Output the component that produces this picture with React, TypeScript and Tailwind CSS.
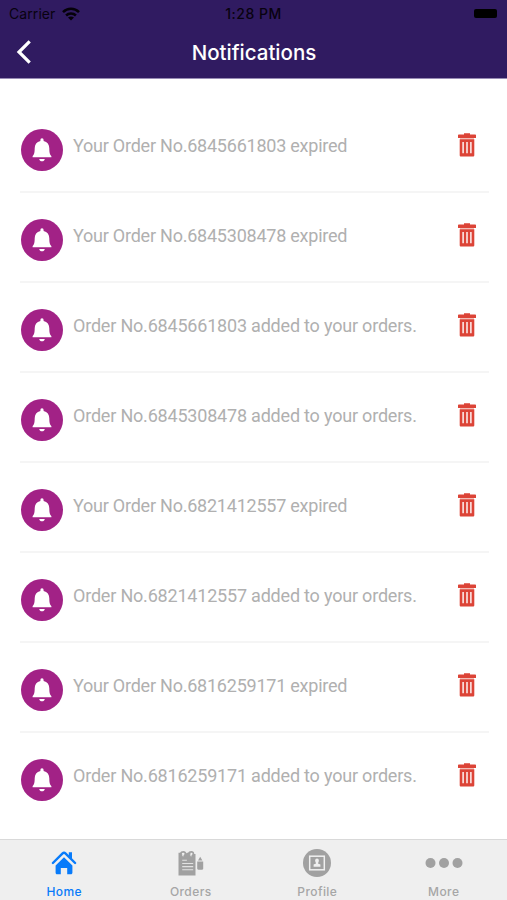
const messages = [
  'Your Order No.6845661803 expired',
  'Your Order No.6845308478 expired',
  'Order No.6845661803 added to your orders.',
  'Order No.6845308478 added to your orders.',
  'Your Order No.6821412557 expired',
  'Order No.6821412557 added to your orders.',
  'Your Order No.6816259171 expired',
  'Order No.6816259171 added to your orders.',
];

function Wifi() {
  return (
    <svg width="18" height="14" viewBox="0 0 18 14" fill="none" stroke="#050109" strokeWidth="2.5">
      <path d="M1 5.2C5.5 0.7 12.5 0.7 17 5.2" />
      <path d="M4.1 8.5C6.8 5.8 11.2 5.8 13.9 8.5" />
      <path d="M9 13.4L6 10.5C7.7 9 10.3 9 12 10.5Z" fill="#050109" stroke="none" />
    </svg>
  );
}

function Bell() {
  return (
    <svg width="42" height="42" viewBox="0 0 42 42" fill="white">
      <path d="M21 9.2c-1.1 0-1.6.8-1.6 2v.9c-3.8.8-5.7 3.5-5.7 7.2 0 4.6-.7 6.5-2.1 7.9v1.1h18.8v-1.1c-1.4-1.4-2.1-3.3-2.1-7.9 0-3.7-1.9-6.4-5.7-7.2v-.9c0-1.2-.5-2-1.6-2Z" />
      <path d="M18.2 30h5.6c-.3 1.5-1.3 2.3-2.8 2.3s-2.5-.8-2.8-2.3Z" />
    </svg>
  );
}

function Trash() {
  return (
    <svg width="20" height="26" viewBox="0 0 20 26" fill="#dc4437">
      <path d="M7 1.3h6v1.2h5c.6 0 1 .4 1 1v2.5H1V3.5c0-.6.4-1 1-1h5Z" />
      <path d="M3 6h14v1.5H3Z" fill="#f3bcb6" />
      <path fillRule="evenodd" d="M2.7 7.3h14.6v15.9c0 .8-.5 1.3-1.3 1.3H4c-.8 0-1.3-.5-1.3-1.3ZM5.4 10v11.2h1.4V10Zm3.9 0v11.2h1.4V10Zm3.9 0v11.2h1.4V10Z" />
    </svg>
  );
}

function HomeIcon() {
  return (
    <svg width="26" height="26" viewBox="0 0 26 26" fill="#087bfa">
      <path d="M1.9 13L11.6 3.4Q13 2 14.4 3.4L24.1 13" fill="none" stroke="#087bfa" strokeWidth="2.4" strokeLinecap="round" />
      <path d="M17.8 2.3h3.2v7.2l-3.2-3.2Z" />
      <path d="M13 7.3l8.4 8.1v7.3c0 .9-.6 1.5-1.5 1.5h-3.7v-6.1H9.8v6.1H6.1c-.9 0-1.5-.6-1.5-1.5v-7.3Z" />
    </svg>
  );
}

function OrdersIcon() {
  return (
    <svg width="28" height="28" viewBox="0 0 28 28" fill="#a1a1a1">
      <path d="M1.5 3.8h3l1.5 3.6 3.8-3.6h3.4l1.5 3.6 2.2-2.4h1.6V26.6h-17Z" />
      <path d="M3.6 4.6c.9-2.4 4.7-2.3 4.8.1 0 1.3-.9 2.2-2.2 2.4M11.6 4.6c.9-2.4 4.7-2.3 4.8.1 0 1.3-.9 2.2-2.2 2.4" fill="none" stroke="#a1a1a1" strokeWidth="1.7" />
      <path d="M5.2 5.3l1.2 2M13.2 5.3l1.2 2M5.2 11.3h4.7M5.2 14.5h11M5.2 17.6h11M5.2 20.8h11" stroke="#e2e2e2" strokeWidth="1.1" />
      <path d="M20.2 12.6h6v7c0 .8-.4 1.2-1.2 1.2h-3.6c-.8 0-1.2-.4-1.2-1.2ZM23.2 7.8l2.2 3.7H21Z" />
    </svg>
  );
}

function ProfileIcon() {
  return (
    <svg width="28" height="28" viewBox="0 0 28 28" fill="#a1a1a1">
      <circle cx="14" cy="14" r="14" />
      <rect x="6.7" y="7.2" width="14.6" height="13.6" fill="none" stroke="#f0f0f0" strokeWidth="1.5" />
      <ellipse cx="14" cy="11.8" rx="1.9" ry="2.4" fill="#f0f0f0" />
      <path d="M13 13h2v1.5l2.4 1v2.3h-6.8v-2.3l2.4-1Z" fill="#f0f0f0" />
    </svg>
  );
}

function MoreIcon() {
  return (
    <svg width="38" height="28" viewBox="0 0 38 28" fill="#a1a1a1">
      <circle cx="5.5" cy="14" r="5" />
      <circle cx="19" cy="14" r="5" />
      <circle cx="32.5" cy="14" r="5" />
    </svg>
  );
}

const tabs = [
  { label: 'Home', icon: <HomeIcon />, color: 'text-[#087bfa]' },
  { label: 'Orders', icon: <OrdersIcon />, color: 'text-[#a6a6a6]' },
  { label: 'Profile', icon: <ProfileIcon />, color: 'text-[#a6a6a6]' },
  { label: 'More', icon: <MoreIcon />, color: 'text-[#a6a6a6]' },
];

export default function App() {
  return (
    <div className="flex h-[900px] w-[507px] flex-col overflow-hidden bg-white font-['Inter',sans-serif]">
      <header className="h-[79px] shrink-0 border-b border-[#978bb4] bg-[#301b61]">
        <div className="grid h-[27px] grid-cols-3 items-center pr-[9px] pl-[9px] text-[14px] text-[#08020f]">
          <div className="flex items-center gap-[7px]">
            <span className="tracking-[0.08px]">Carrier</span>
            <Wifi />
          </div>
          <span className="text-center text-[14px] font-medium tracking-[0.5px]">1:28 PM</span>
          <span className="mr-px h-[9px] w-[23px] justify-self-end rounded-[2px] bg-black" />
        </div>
        <div className="grid h-[50px] grid-cols-[48px_1fr_48px] items-center">
          <svg className="ml-[16px]" width="16" height="26" viewBox="0 0 16 26" fill="none" stroke="white" strokeWidth="3.2">
            <path d="M13.7 2.3L3 13L13.7 23.7" />
          </svg>
          <h1 className="pt-[2px] pl-px text-center text-[20.5px] font-medium tracking-[0px] text-white">Notifications</h1>
        </div>
      </header>
      <main className="flex-1 pt-[24px] pr-[18px] pl-[20px]">
        {messages.map((message, i) => (
          <div key={message} className={`flex h-[90px] items-start border-b-2 ${i < 7 ? 'border-[#f5f5f5]' : 'border-transparent'}`}>
            <span className="mt-[26px] ml-[0.5px] size-[42px] rounded-full bg-[#a22286]">
              <Bell />
            </span>
            <span className={`mt-[31px] ml-[10.5px] flex-1 font-['Roboto',sans-serif] text-[18px] leading-[24px] font-normal whitespace-nowrap text-[#b0b0b0] ${message.startsWith('Your') ? 'tracking-[-0.23px]' : 'tracking-[-0.2px]'}`}>
              {message}
            </span>
            <span className="mt-[28.5px] mr-[12px]">
              <Trash />
            </span>
          </div>
        ))}
      </main>
      <nav className="grid h-[61px] shrink-0 grid-cols-4 border-t border-[#d9d9d9] bg-[#efefef] pl-px">
        {tabs.map((tab) => (
          <div key={tab.label} className={`flex flex-col items-center pt-[9px] ${tab.color}`}>
            <div className="flex h-[28px] items-center">{tab.icon}</div>
            <span className="mt-[6.5px] text-[12px] leading-[15px] font-medium tracking-[0.4px]">{tab.label}</span>
          </div>
        ))}
      </nav>
    </div>
  );
}
